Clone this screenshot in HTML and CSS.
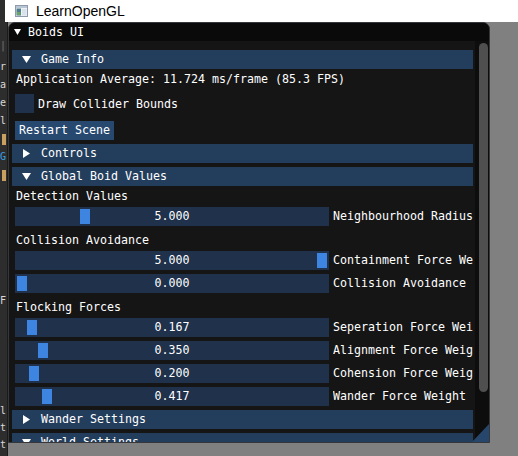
FILE: index.html
```html
<!DOCTYPE html>
<html>
<head>
<meta charset="utf-8">
<link rel="stylesheet" href="styles.css">
</head>
<body>
<div class="os-title">
  <div class="os-edge"></div>
  <div class="os-label">
    <svg class="app-icon" width="13" height="12" viewBox="0 0 13 12">
      <rect x="0.5" y="0.5" width="12" height="11" fill="#eef2f6" stroke="#8c9aab"/>
      <rect x="1" y="1" width="11" height="2" fill="#b8c6d6"/>
      <rect x="1.5" y="3.5" width="4.5" height="7" fill="#4f7d8c"/>
      <rect x="2" y="7" width="3.5" height="3" fill="#6aa36a"/>
      <rect x="7" y="4" width="4.5" height="6.5" fill="#d9e2ea"/>
    </svg>
    <span>LearnOpenGL</span>
  </div>
</div>
<div class="desk">
  <div class="strip">
    <div class="sline gray">|</div>
    <div class="sgroup">
      <div class="sline">r</div>
      <div class="sline">a</div>
      <div class="sline">e</div>
      <div class="sline">l</div>
      <div class="sline"><span class="mark orange"></span></div>
      <div class="sline blue">G</div>
      <div class="sline"><span class="mark orange"></span></div>
    </div>
    <div class="sgroup2">
      <div class="sline">F</div>
    </div>
    <div class="sgroup3">
      <div class="sline">l</div>
      <div class="sline">t</div>
      <div class="sline">t</div>
    </div>
  </div>
  <div class="scene">
    <div class="imwin">
      <div class="imtitle">
        <svg class="tri" width="7" height="8" viewBox="0 0 7 8"><polygon points="0,1 7,1 3.5,7" fill="#fff"/></svg>
        <span class="imtitle-text">Boids UI</span>
      </div>
      <div class="imbody">
        <div class="content">
          <div class="hdr">
            <svg class="arrow" width="9" height="9" viewBox="0 0 9 9"><polygon points="0,1 9,1 4.5,8" fill="#fff"/></svg>
            <span class="hdr-text">Game Info</span>
          </div>
          <div class="txt">Application Average: 11.724 ms/frame (85.3 FPS)</div>
          <div class="check-row">
            <div class="checkbox"></div>
            <span class="check-label">Draw Collider Bounds</span>
          </div>
          <div class="button">Restart Scene</div>
          <div class="hdr hdr-tight">
            <svg class="arrow" width="9" height="9" viewBox="0 0 9 9"><polygon points="1,0 8,4.5 1,9" fill="#fff"/></svg>
            <span class="hdr-text">Controls</span>
          </div>
          <div class="hdr hdr-tight">
            <svg class="arrow" width="9" height="9" viewBox="0 0 9 9"><polygon points="0,1 9,1 4.5,8" fill="#fff"/></svg>
            <span class="hdr-text">Global Boid Values</span>
          </div>
          <div class="txt">Detection Values</div>
          <div class="slider-row">
            <div class="slider"><div class="grab" style="margin-left:65px"></div><span class="val">5.000</span></div>
            <span class="slabel">Neighbourhood Radius</span>
          </div>
          <div class="txt txt-spaced">Collision Avoidance</div>
          <div class="slider-row">
            <div class="slider"><div class="grab" style="margin-left:302px"></div><span class="val">5.000</span></div>
            <span class="slabel">Containment Force Weight</span>
          </div>
          <div class="slider-row">
            <div class="slider"><div class="grab" style="margin-left:2px"></div><span class="val">0.000</span></div>
            <span class="slabel">Collision Avoidance</span>
          </div>
          <div class="txt txt-spaced">Flocking Forces</div>
          <div class="slider-row">
            <div class="slider"><div class="grab" style="margin-left:12px"></div><span class="val">0.167</span></div>
            <span class="slabel">Seperation Force Weight</span>
          </div>
          <div class="slider-row">
            <div class="slider"><div class="grab" style="margin-left:23px"></div><span class="val">0.350</span></div>
            <span class="slabel">Alignment Force Weight</span>
          </div>
          <div class="slider-row">
            <div class="slider"><div class="grab" style="margin-left:14px"></div><span class="val">0.200</span></div>
            <span class="slabel">Cohension Force Weight</span>
          </div>
          <div class="slider-row">
            <div class="slider"><div class="grab" style="margin-left:27px"></div><span class="val">0.417</span></div>
            <span class="slabel">Wander Force Weight</span>
          </div>
          <div class="hdr hdr-tight">
            <svg class="arrow" width="9" height="9" viewBox="0 0 9 9"><polygon points="1,0 8,4.5 1,9" fill="#fff"/></svg>
            <span class="hdr-text">Wander Settings</span>
          </div>
          <div class="hdr hdr-tight">
            <svg class="arrow" width="9" height="9" viewBox="0 0 9 9"><polygon points="0,1 9,1 4.5,8" fill="#fff"/></svg>
            <span class="hdr-text">World Settings</span>
          </div>
        </div>
        <div class="scrollbar"><div class="sgrab"></div></div>
      </div>
      <svg class="grip" width="17" height="18" viewBox="0 0 17 18"><polygon points="17,0 17,18 0,18" fill="#27466c"/></svg>
    </div>
  </div>
</div>
</body>
</html>
```

FILE: styles.css
```css
* { box-sizing: border-box; }
html, body { margin: 0; padding: 0; }
body {
  width: 518px;
  height: 456px;
  overflow: hidden;
  background: #808080;
  font-family: "DejaVu Sans Mono", "Liberation Mono", monospace;
  font-size: 11.63px;
  color: #fff;
}
.os-title {
  display: flex;
  height: 22px;
  background: #fff;
}
.os-edge {
  width: 5px;
  background: #2d2d2d;
}
.os-label {
  display: flex;
  align-items: center;
  gap: 8px;
  padding-left: 10px;
  font-family: "Liberation Sans", Arial, sans-serif;
  font-size: 14px;
  color: #000;
}
.app-icon { display: block; }
.desk {
  display: flex;
  height: 434px;
}
.strip {
  width: 8px;
  flex-shrink: 0;
  background: #2d2d2d;
  border-right: 1px solid #1b1b1b;
  overflow: hidden;
  display: flex;
  flex-direction: column;
  font-family: "DejaVu Sans Mono", monospace;
  font-size: 10px;
  color: #d8d8d8;
  padding-top: 15px;
}
.sline {
  height: 18px;
  line-height: 18px;
  display: flex;
  justify-content: flex-end;
  align-items: center;
  white-space: nowrap;
  padding-right: 1px;
}
.sline.gray { color: #777; height: 17px; }
.sline.blue { color: #3aa0e8; }
.sgroup { margin-top: 4px; }
.sgroup2 { margin-top: 108px; }
.sgroup3 { margin-top: 92px; }
.sgroup3 .sline { height: 17px; line-height: 17px; }
.mark {
  display: block;
  width: 4px;
  height: 11px;
}
.mark.orange { background: #c8a060; }
.scene {
  flex: 1;
  display: flex;
  flex-direction: column;
}
.imwin {
  position: relative;
  width: 482px;
  height: 421px;
  background: #151515;
  border: 1px solid #36363d;
  border-radius: 7px 7px 0 0;
  overflow: hidden;
  display: flex;
  flex-direction: column;
}
.imtitle {
  height: 18px;
  flex-shrink: 0;
  background: #0a0a0a;
  display: flex;
  align-items: center;
  padding-left: 5px;
  gap: 7px;
}
.tri { display: block; }
.imtitle-text { line-height: 13px; }
.imbody {
  flex: 1;
  display: flex;
  min-height: 0;
}
.content {
  flex: 1;
  min-width: 0;
  padding: 9px 2px 0 3px;
  display: flex;
  flex-direction: column;
  overflow: hidden;
}
.hdr {
  height: 19px;
  flex-shrink: 0;
  background: #233d5c;
  display: flex;
  align-items: center;
}
.hdr-tight { margin-top: 4px; }
.arrow { display: block; margin-left: 10px; }
.hdr-text { margin-left: 10px; line-height: 13px; }
.txt {
  height: 13px;
  line-height: 13px;
  margin-top: 4px;
  margin-left: 4px;
  white-space: nowrap;
  flex-shrink: 0;
}
.txt-spaced { margin-top: 8px; }
.check-row {
  display: flex;
  align-items: center;
  gap: 4px;
  margin-top: 8px;
  margin-left: 3px;
  height: 19px;
  flex-shrink: 0;
}
.checkbox {
  width: 19px;
  height: 19px;
  background: #20314b;
}
.button {
  align-self: flex-start;
  margin-top: 8px;
  margin-left: 3px;
  height: 19px;
  line-height: 19px;
  padding: 0 4px;
  background: #274970;
  flex-shrink: 0;
}
.slider-row {
  display: flex;
  align-items: center;
  gap: 4px;
  margin-top: 4px;
  margin-left: 3px;
  height: 19px;
  flex-shrink: 0;
}
.slider {
  width: 314px;
  height: 19px;
  flex-shrink: 0;
  background: #20314b;
  display: grid;
}
.grab {
  grid-area: 1 / 1;
  justify-self: start;
  align-self: center;
  width: 10px;
  height: 15px;
  background: #3d85e0;
}
.val {
  grid-area: 1 / 1;
  justify-self: center;
  align-self: center;
  line-height: 13px;
}
.slabel {
  width: 140px;
  overflow: hidden;
  white-space: nowrap;
  line-height: 13px;
}
.scrollbar {
  width: 14px;
  flex-shrink: 0;
  background: #0d0d0d;
  padding: 2px 1px 0 4px;
}
.sgrab {
  width: 9px;
  height: 349px;
  background: #4f4f4f;
  border-radius: 5px;
}
.grip {
  position: absolute;
  right: 0;
  bottom: 0;
  display: block;
}
```
